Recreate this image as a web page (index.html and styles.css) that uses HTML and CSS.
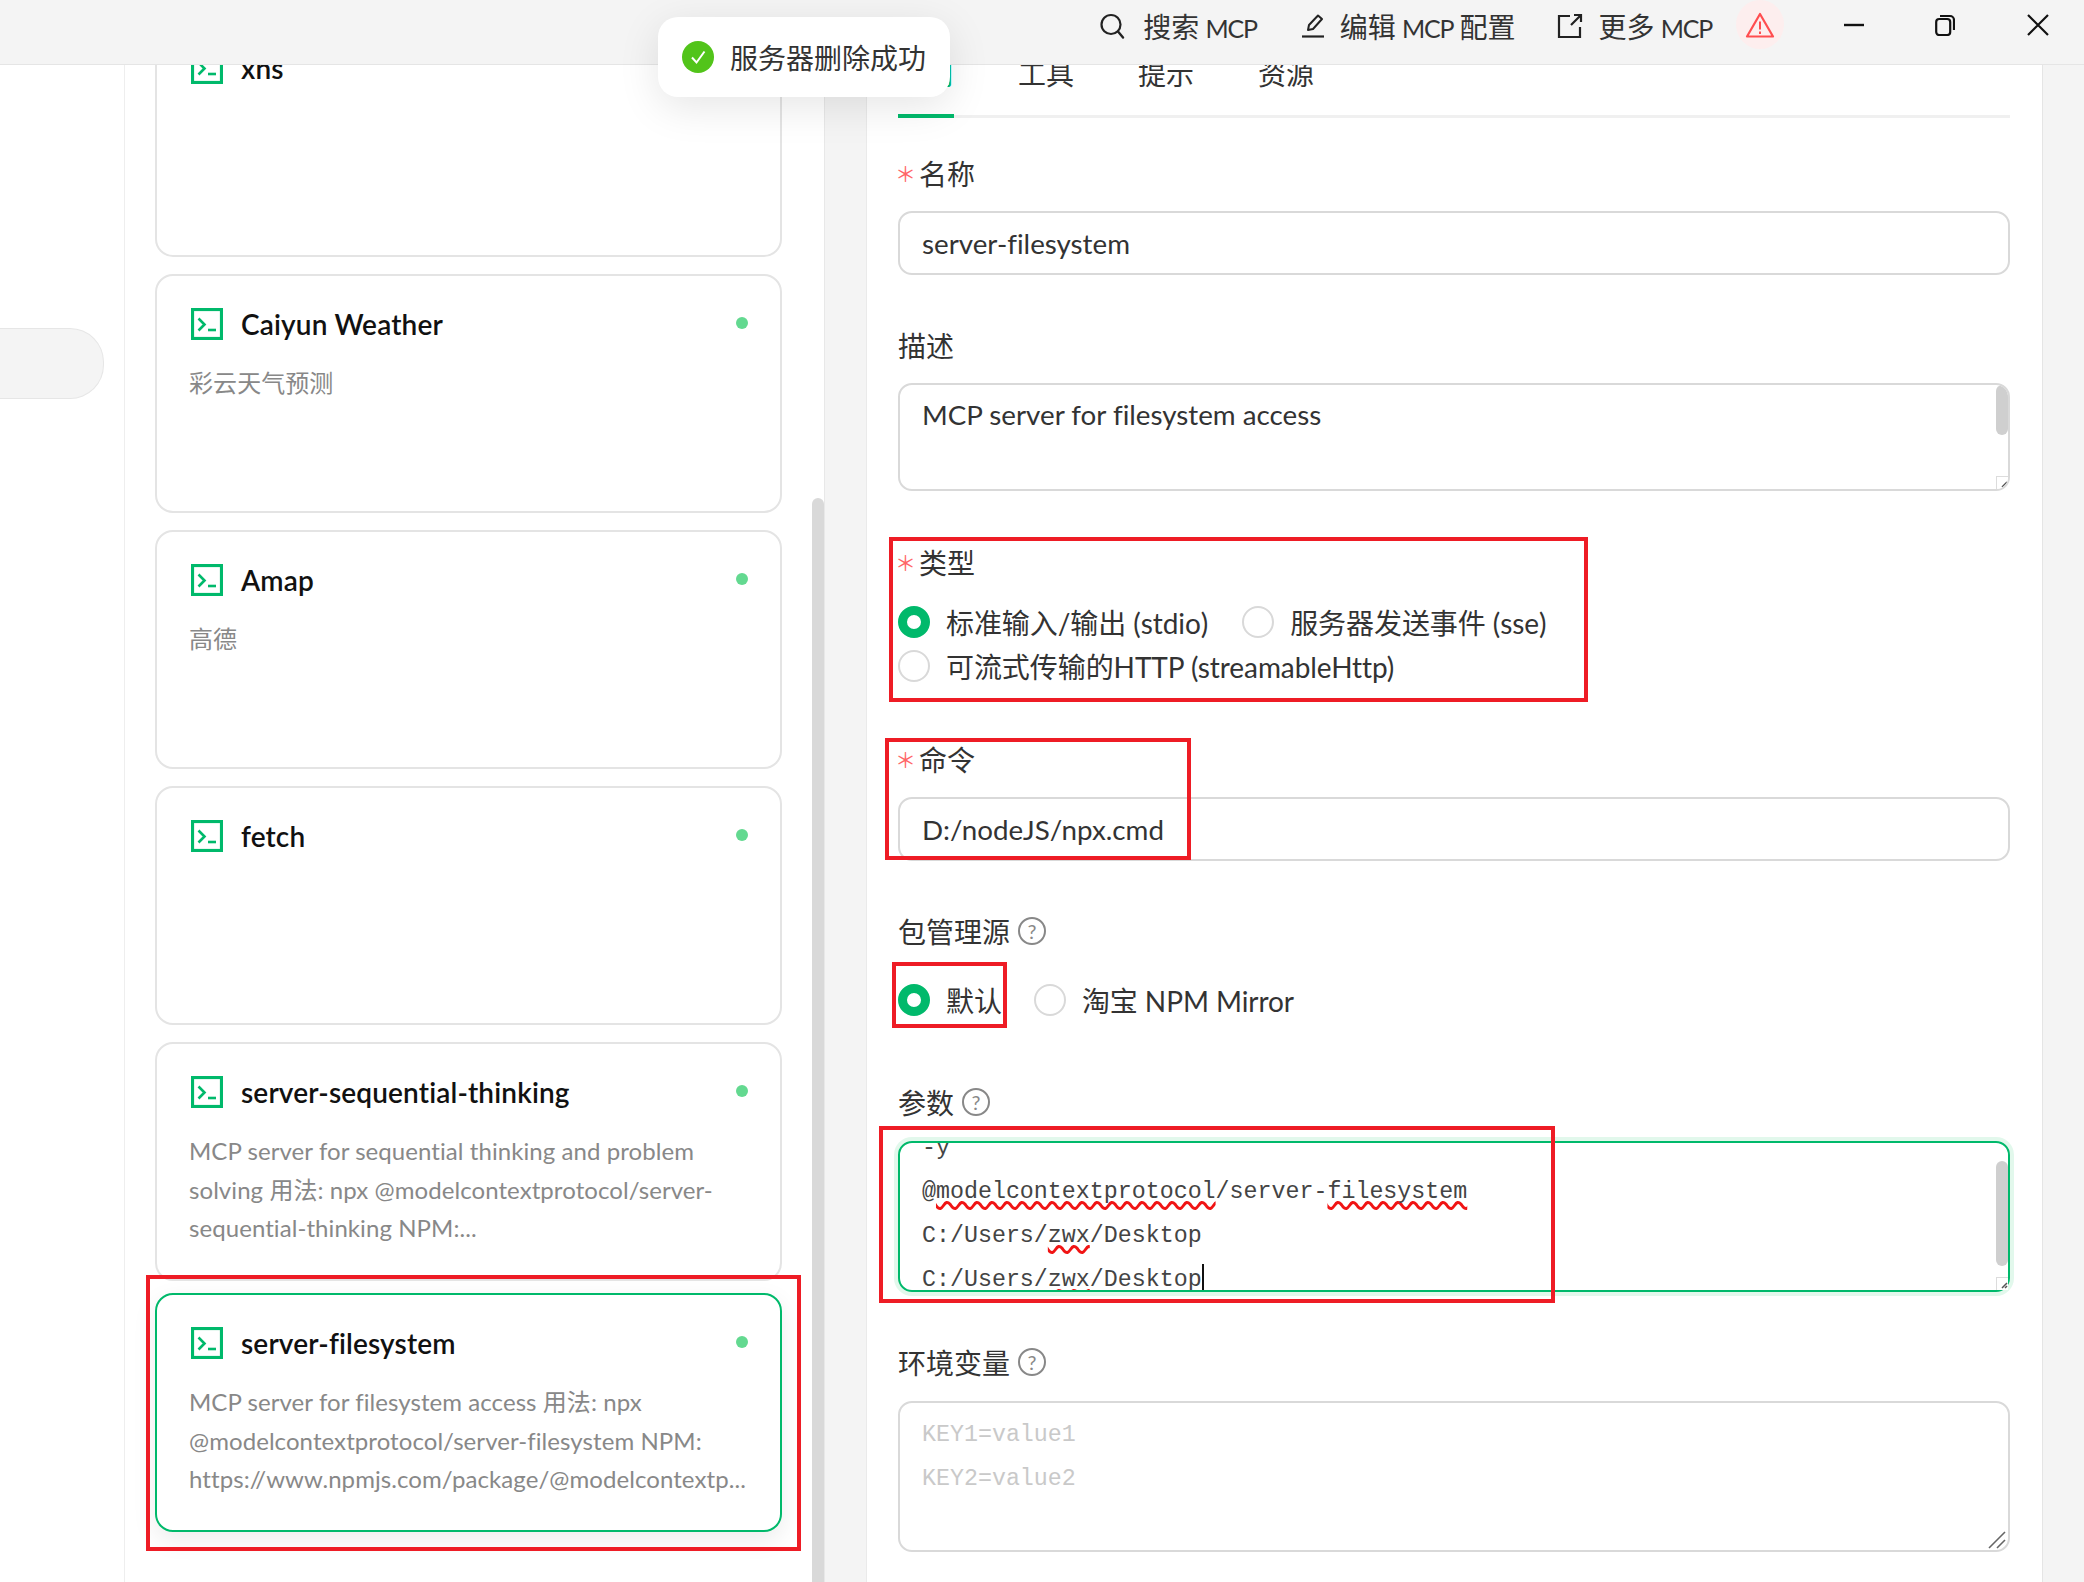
FILE: index.html
```html
<!DOCTYPE html>
<html lang="zh">
<head>
<meta charset="utf-8">
<title>MCP 设置</title>
<link rel="stylesheet" href="styles.css">
</head>
<body>
<div class="app">
  <header class="topbar">
    <div class="topbar-actions">
      <div class="action action-search">
        <svg class="action-icon" viewBox="0 0 26 26" width="26" height="26"><circle cx="12" cy="11.5" r="9.5" fill="none" stroke="#222" stroke-width="2.2"/><path d="M19 18.5l5 6" fill="none" stroke="#222" stroke-width="2.4" stroke-linecap="round"/></svg>
        <span>搜索 <span class="en">MCP</span></span>
      </div>
      <div class="action action-edit">
        <svg class="action-icon" viewBox="0 0 26 26" width="26" height="26"><path d="M8 17l1-5L18 2.500l4 3.500-9 10z" fill="none" stroke="#222" stroke-width="2" stroke-linejoin="round"/><path d="M2 23.500h22" stroke="#222" stroke-width="2.200"/></svg>
        <span>编辑 <span class="en">MCP</span> 配置</span>
      </div>
      <div class="action action-more">
        <svg class="action-icon" viewBox="0 0 26 26" width="26" height="26"><path d="M13 3H2v21h21V14" fill="none" stroke="#222" stroke-width="2.200"/><path d="M14 12L23 3M17 2h7v7" fill="none" stroke="#222" stroke-width="2.200"/></svg>
        <span>更多 <span class="en">MCP</span></span>
      </div>
      <div class="warn">
        <svg viewBox="0 0 30 26" width="30" height="26"><path d="M15 2L28 24.500H2z" fill="none" stroke="#ff4d4f" stroke-width="2.200" stroke-linejoin="round"/><path d="M15 9.500v8M15 19.500v2.500" stroke="#ff4d4f" stroke-width="2"/></svg>
      </div>
    </div>
    <div class="win-controls">
      <svg class="win-min" viewBox="0 0 20 4" width="20" height="4"><path d="M0 2h20" stroke="#111" stroke-width="2.400"/></svg>
      <svg class="win-restore" viewBox="0 0 20 22" width="20" height="22"><rect x="1.200" y="5" width="14" height="16" rx="3" fill="none" stroke="#111" stroke-width="2.200"/><path d="M5 2h10a4 4 0 0 1 4 4v10" fill="none" stroke="#111" stroke-width="2.200"/></svg>
      <svg class="win-close" viewBox="0 0 22 22" width="22" height="22"><path d="M1 1l20 20M21 1L1 21" stroke="#111" stroke-width="2.200"/></svg>
    </div>
  </header>

  <main class="main">
    <nav class="nav"><div class="nav-pill"></div></nav>

    <section class="list-pane">
      <div class="list">
        <article class="card">
          <div class="card-head"><svg class="term" viewBox="0 0 32 32" width="32" height="32"><rect x="1.500" y="1.500" width="29" height="29" fill="none" stroke="#00b96b" stroke-width="3.200"/><path d="M7.500 10.500l6 6-6 6" fill="none" stroke="#00b96b" stroke-width="2.600"/><path d="M17 22h8" stroke="#00b96b" stroke-width="2.600"/></svg><h3>xns</h3><i class="dot dot-hidden"></i></div>
        </article>
        <article class="card">
          <div class="card-head"><svg class="term" viewBox="0 0 32 32" width="32" height="32"><rect x="1.500" y="1.500" width="29" height="29" fill="none" stroke="#00b96b" stroke-width="3.200"/><path d="M7.500 10.500l6 6-6 6" fill="none" stroke="#00b96b" stroke-width="2.600"/><path d="M17 22h8" stroke="#00b96b" stroke-width="2.600"/></svg><h3>Caiyun Weather</h3><i class="dot"></i></div>
          <p class="desc">彩云天气预测</p>
        </article>
        <article class="card">
          <div class="card-head"><svg class="term" viewBox="0 0 32 32" width="32" height="32"><rect x="1.500" y="1.500" width="29" height="29" fill="none" stroke="#00b96b" stroke-width="3.200"/><path d="M7.500 10.500l6 6-6 6" fill="none" stroke="#00b96b" stroke-width="2.600"/><path d="M17 22h8" stroke="#00b96b" stroke-width="2.600"/></svg><h3>Amap</h3><i class="dot"></i></div>
          <p class="desc">高德</p>
        </article>
        <article class="card">
          <div class="card-head"><svg class="term" viewBox="0 0 32 32" width="32" height="32"><rect x="1.500" y="1.500" width="29" height="29" fill="none" stroke="#00b96b" stroke-width="3.200"/><path d="M7.500 10.500l6 6-6 6" fill="none" stroke="#00b96b" stroke-width="2.600"/><path d="M17 22h8" stroke="#00b96b" stroke-width="2.600"/></svg><h3>fetch</h3><i class="dot"></i></div>
        </article>
        <article class="card">
          <div class="card-head"><svg class="term" viewBox="0 0 32 32" width="32" height="32"><rect x="1.500" y="1.500" width="29" height="29" fill="none" stroke="#00b96b" stroke-width="3.200"/><path d="M7.500 10.500l6 6-6 6" fill="none" stroke="#00b96b" stroke-width="2.600"/><path d="M17 22h8" stroke="#00b96b" stroke-width="2.600"/></svg><h3>server-sequential-thinking</h3><i class="dot"></i></div>
          <p class="desc">MCP server for sequential thinking and problem<br>solving 用法: npx @modelcontextprotocol/server-<br>sequential-thinking NPM:...</p>
        </article>
        <article class="card card-active">
          <div class="card-head"><svg class="term" viewBox="0 0 32 32" width="32" height="32"><rect x="1.500" y="1.500" width="29" height="29" fill="none" stroke="#00b96b" stroke-width="3.200"/><path d="M7.500 10.500l6 6-6 6" fill="none" stroke="#00b96b" stroke-width="2.600"/><path d="M17 22h8" stroke="#00b96b" stroke-width="2.600"/></svg><h3>server-filesystem</h3><i class="dot"></i></div>
          <p class="desc">MCP server for filesystem access 用法: npx<br>@modelcontextprotocol/server-filesystem NPM:<br>https://www.npmjs.com/package/@modelcontextp...</p>
        </article>
      </div>
      <div class="list-scroll"></div>
    </section>

    <section class="form-pane">
      <div class="tabs">
        <span class="tab tab-active">通用</span>
        <span class="tab">工具</span>
        <span class="tab">提示</span>
        <span class="tab">资源</span>
      </div>

      <div class="item">
        <div class="label"><b class="req">＊</b>名称</div>
        <div class="field">server-filesystem</div>
      </div>
      <div class="item item-desc">
        <div class="label">描述</div>
        <div class="area area-desc">MCP server for filesystem access
          <span class="bar bar-desc"></span>
          <span class="mini-resize"><svg viewBox="0 0 12 12" width="12" height="12"><path d="M5 10l5-5M8 10l2-2" stroke="#555" stroke-width="1.500"/></svg></span>
        </div>
      </div>
      <div class="item item-type">
        <div class="label"><b class="req">＊</b>类型</div>
        <div class="radios">
          <div class="radio-row">
            <label class="radio"><i class="knob knob-on"></i>标准输入/输出 (stdio)</label>
            <label class="radio radio-gap"><i class="knob"></i>服务器发送事件 (sse)</label>
          </div>
          <div class="radio-row">
            <label class="radio"><i class="knob"></i>可流式传输的HTTP (streamableHttp)</label>
          </div>
        </div>
      </div>
      <div class="item">
        <div class="label"><b class="req">＊</b>命令</div>
        <div class="field">D:/nodeJS/npx.cmd</div>
      </div>
      <div class="item">
        <div class="label">包管理源<span class="help">?</span></div>
        <div class="radios radios-single">
          <div class="radio-row">
            <label class="radio"><i class="knob knob-on"></i>默认</label>
            <label class="radio radio-gap-sm"><i class="knob"></i>淘宝 NPM Mirror</label>
          </div>
        </div>
      </div>
      <div class="item item-code">
        <div class="label">参数<span class="help">?</span></div>
        <div class="area area-code area-focus">
          <div class="code code-scrolled">
            <div>-y</div>
            <div>@<span class="spell">modelcontextprotocol</span>/server-<span class="spell">filesystem</span></div>
            <div>C:/Users/<span class="spell">zwx</span>/Desktop</div>
            <div>C:/Users/<span class="spell">zwx</span>/Desktop<span class="caret"></span></div>
          </div>
          <span class="bar bar-code"></span>
          <span class="mini-resize"><svg viewBox="0 0 12 12" width="12" height="12"><path d="M5 10l5-5M8 10l2-2" stroke="#555" stroke-width="1.500"/></svg></span>
        </div>
      </div>
      <div class="item item-code">
        <div class="label">环境变量<span class="help">?</span></div>
        <div class="area area-code">
          <div class="code code-placeholder">
            <div>KEY1=value1</div>
            <div>KEY2=value2</div>
          </div>
          <svg class="grip" viewBox="0 0 18 18" width="18" height="18"><path d="M1 17L17 1M9 17l8-8" stroke="#666" stroke-width="1.600"/></svg>
        </div>
      </div>
    </section>
    <div class="gutter"></div>
  </main>

  <div class="toast">
    <svg viewBox="0 0 32 32" width="32" height="32"><circle cx="16" cy="16" r="16" fill="#52c41a"/><path d="M10 16.500l4.500 5 8-11" fill="none" stroke="#fff" stroke-width="2"/></svg>
    <span>服务器删除成功</span>
  </div>

  <div class="mark mark-card"></div>
  <div class="mark mark-type"></div>
  <div class="mark mark-cmd"></div>
  <div class="mark mark-default"></div>
  <div class="mark mark-args"></div>
</div>
</body>
</html>
```

FILE: styles.css
```css
* { box-sizing: border-box; }
html, body { margin: 0; padding: 0; }
body {
  font-family: Lato, "Noto Sans CJK SC", sans-serif;
  font-size: 28px;
  font-variant-ligatures: none;
  color: #333;
  background: #fff;
}
.app {
  position: relative;
  width: 2084px;
  height: 1582px;
  overflow: hidden;
  display: flex;
  flex-direction: column;
}

/* top bar */
.topbar {
  position: relative;
  z-index: 2;
  flex: none;
  height: 65px;
  background: #f4f4f4;
  border-bottom: 1px solid #e5e5e5;
  display: flex;
  justify-content: flex-end;
  align-items: flex-start;
}
.topbar-actions { display: flex; align-items: flex-start; margin-right: 60px; }
.action { display: flex; align-items: center; height: 52px; color: #333; white-space: nowrap; word-spacing: -1px; }
.en { font-size: 25px; letter-spacing: -1.2px; }
.action-icon { margin-right: 18px; flex: none; }
.action-edit { margin-left: 43px; }
.action-edit .action-icon { margin-right: 14px; }
.action-more { margin-left: 41px; }
.action-more .action-icon { margin-right: 16px; }
.warn {
  margin-left: 24px;
  width: 48px;
  height: 49px;
  border-radius: 50%;
  background: #fdeeee;
  display: flex;
  align-items: center;
  justify-content: center;
}
.win-controls { display: flex; align-items: center; height: 50px; margin-right: 35px; }
.win-min { margin-right: 71px; }
.win-restore { margin-right: 72px; }

/* main columns */
.main { flex: 1; display: flex; min-height: 0; overflow: hidden; background: #f4f4f4; }
.nav { width: 125px; flex: none; background: #fff; border-right: 1px solid #eeeeee; padding-top: 263px; }
.nav-pill {
  width: 104px;
  height: 71px;
  background: #f4f4f4;
  border: 1px solid #e6e6e6;
  border-left: 0;
  border-radius: 0 34px 34px 0;
}
.list-pane {
  position: relative;
  width: 700px;
  flex: none;
  background: #fff;
  border-right: 1px solid #e8e8e8;
  overflow: hidden;
}
.list {
  display: flex;
  flex-direction: column;
  gap: 17px;
  margin-top: -47px;
  padding-left: 30px;
}
.card {
  flex: none;
  width: 627px;
  height: 239px;
  background: #fff;
  border: 2px solid #e4e4e4;
  border-radius: 18px;
  padding: 32px 32px 0 32px;
}
.card-active {
  border-color: #00b96b;
  transform: translateY(-5px);
  box-shadow: 0 8px 24px rgba(0, 0, 0, .08);
}
.card-head { display: flex; align-items: center; height: 32px; }
.term { flex: none; margin-left: 2px; margin-right: 18px; }
.card h3 {
  margin: 0;
  flex: 1;
  font-size: 28px;
  font-weight: 600;
  letter-spacing: .15px;
  color: #111;
  white-space: nowrap;
}
.dot { flex: none; width: 12px; height: 12px; margin: -2px 0 0 0; border-radius: 50%; background: #63d990; }
.dot-hidden { visibility: hidden; }
.desc {
  margin: 24px 0 0;
  font-size: 24px;
  line-height: 38.500px;
  letter-spacing: .07px;
  color: #888;
  white-space: nowrap;
}
.list-scroll {
  position: absolute;
  right: 0;
  top: 433px;
  bottom: 0;
  width: 12px;
  background: #d9d9d9;
  border-radius: 6px 6px 0 0;
}

/* form */
.form-pane {
  width: 1177px;
  flex: none;
  margin-left: 41px;
  background: #fff;
  border-left: 1px solid #eaeaea;
  border-right: 1px solid #e5e5e5;
  padding: 0 32px 0 31px;
}
.gutter { flex: 1; }
.tabs {
  height: 53px;
  display: flex;
  gap: 64px;
  border-bottom: 3px solid #f0f0f0;
  margin-bottom: 35px;
}
.tab {
  position: relative;
  height: 53px;
  line-height: 18px;
  color: #333;
}
.tab-active { color: #00b96b; }
.tab-active::after {
  content: "";
  position: absolute;
  left: 0;
  right: 0;
  bottom: 0;
  height: 4px;
  background: #00b96b;
}
.item { margin-bottom: 50px; }
.item-desc, .item-type { margin-bottom: 51px; }
.label {
  display: flex;
  align-items: center;
  height: 40px;
  margin-bottom: 18px;
  color: #333;
}
.item-code .label { margin-bottom: 19px; }
.req {
  width: 21px;
  margin-left: -3px;
  margin-right: 3px;
  color: #ff6668;
  font-family: "Noto Sans CJK SC", sans-serif;
  font-weight: 400;
  font-size: 21px;
}
.help {
  flex: none;
  width: 28px;
  height: 28px;
  margin-left: 8px;
  border: 2px solid #888;
  border-radius: 50%;
  color: #888;
  font-size: 20px;
  line-height: 24px;
  text-align: center;
}
.field {
  height: 64px;
  border: 2px solid #d9d9d9;
  border-radius: 14px;
  padding: 0 22px;
  font-size: 27.750px;
  line-height: 61px;
  color: #333;
}
.area {
  position: relative;
  border: 2px solid #d9d9d9;
  border-radius: 14px;
  padding: 0 22px;
  color: #333;
  overflow: hidden;
}
.area-desc { height: 108px; padding-top: 8px; font-size: 27.750px; line-height: 44px; }
.area-code { height: 151px; }
.area-focus {
  border-color: #00b96b;
  box-shadow: 0 0 0 4px #e2f8ec;
  overflow: visible;
}
.code {
  font-family: "Liberation Mono", monospace;
  font-size: 23.300px;
  line-height: 44px;
  color: #444;
  height: 100%;
  overflow: hidden;
}
.code-scrolled > div { position: relative; top: -17px; }
.code-scrolled { overflow: hidden; }
.code-placeholder { padding-top: 10px; color: #c9c9c9; }
.spell {
  text-decoration: underline wavy #f01414;
  text-decoration-thickness: 3px;
  text-underline-offset: 3px;
  text-decoration-skip-ink: none;
}
.caret {
  display: inline-block;
  width: 2px;
  height: 27px;
  background: #111;
  vertical-align: -5px;
}
.bar { position: absolute; right: 0; width: 12px; background: #cfcfcf; border-radius: 6px; }
.bar-desc { top: 0; height: 50px; }
.bar-code { top: 18px; height: 105px; }
.mini-resize {
  position: absolute;
  right: 0;
  bottom: 0;
  width: 12px;
  height: 13px;
  background: #fff;
  border: 1px solid #dcdcdc;
  border-width: 1px 0 0 1px;
  line-height: 0;
}
.grip { position: absolute; right: 2px; bottom: 1px; }

.radios-single { padding-top: 9px; padding-bottom: 10px; }
.radio-row { display: flex; height: 44px; align-items: center; }
.radio { display: flex; align-items: center; white-space: nowrap; color: #333; letter-spacing: -.07px; }
.radio-gap { margin-left: 34px; }
.radio-gap-sm { margin-left: 32px; }
.knob {
  flex: none;
  width: 32px;
  height: 32px;
  margin-right: 16px;
  border: 2px solid #d9d9d9;
  border-radius: 50%;
  background: #fff;
}
.knob-on { border: 9px solid #00b96b; }

/* toast */
.toast {
  position: absolute;
  z-index: 3;
  left: 658px;
  top: 17px;
  width: 292px;
  height: 80px;
  display: flex;
  align-items: center;
  gap: 16px;
  padding-left: 24px;
  background: #fff;
  border-radius: 20px;
  box-shadow: 0 10px 42px rgba(0, 0, 0, .1);
  color: #333;
  white-space: nowrap;
}

/* red annotations */
.mark { position: absolute; z-index: 4; border: 4px solid #ee1c25; pointer-events: none; }
.mark-card { left: 146px; top: 1275px; width: 655px; height: 276px; }
.mark-type { left: 889px; top: 537px; width: 699px; height: 165px; }
.mark-cmd { left: 885px; top: 738px; width: 306px; height: 122px; }
.mark-default { left: 892px; top: 962px; width: 115px; height: 66px; }
.mark-args { left: 879px; top: 1126px; width: 676px; height: 177px; }
```
